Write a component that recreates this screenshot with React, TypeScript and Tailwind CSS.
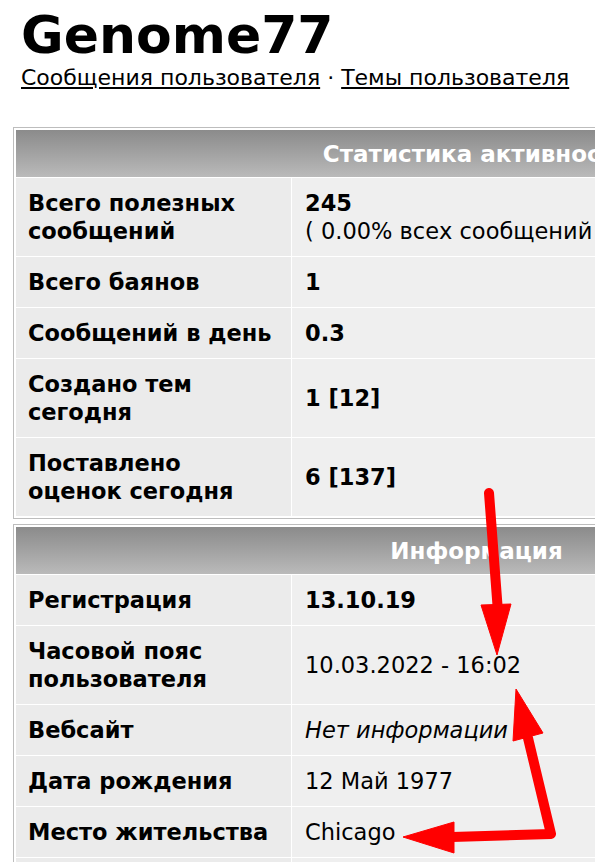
import React from 'react';

type Row = { label: string[]; value: React.ReactNode };

const stats: Row[] = [
  {
    label: ['Всего полезных', 'сообщений'],
    value: (
      <>
        <b>245</b>
        <br />( 0.00% всех сообщений )
      </>
    ),
  },
  { label: ['Всего баянов'], value: <b>1</b> },
  { label: ['Сообщений в день'], value: <b>0.3</b> },
  { label: ['Создано тем', 'сегодня'], value: <b>1 [12]</b> },
  { label: ['Поставлено', 'оценок сегодня'], value: <b>6 [137]</b> },
];

const info: Row[] = [
  { label: ['Регистрация'], value: <b>13.10.19</b> },
  { label: ['Часовой пояс', 'пользователя'], value: '10.03.2022 - 16:02' },
  { label: ['Вебсайт'], value: <i>Нет информации</i> },
  { label: ['Дата рождения'], value: '12 Май 1977' },
  { label: ['Место жительства'], value: 'Chicago' },
  { label: ['Интересы'], value: <i>Нет информации</i> },
];

function StatTable({ title, rows }: { title: string; rows: Row[] }) {
  return (
    <div className="w-[927px] border border-[#bdbdbd] bg-white p-px">
      <table className="w-full border-separate border-spacing-[1px]">
        <thead>
          <tr>
            <th
              colSpan={2}
              className="h-[47px] bg-linear-to-b from-[#8b8b8b] to-[#bababa] text-center text-[23px] font-bold text-white"
            >
              {title}
            </th>
          </tr>
        </thead>
        <tbody>
          {rows.map((r, i) => (
            <tr key={i}>
              <td className="w-[275px] bg-[#ebebeb] px-[12px] py-[11px] align-middle font-bold">
                {r.label.map((l, j) => (
                  <div key={j}>{l}</div>
                ))}
              </td>
              <td className="bg-[#efefef] px-[13px] py-[11px] align-middle whitespace-nowrap">{r.value}</td>
            </tr>
          ))}
        </tbody>
      </table>
    </div>
  );
}

export default function App() {
  return (
    <div className="relative h-[862px] w-[595px] overflow-hidden bg-white font-['DejaVu_Sans',Verdana,sans-serif] text-[22.5px] leading-[28px] text-black">
      <div className="pl-[21px] pt-[9px]">
        <h1 className="text-[52px] leading-none font-bold">Genome77</h1>
        <div className="mt-[3px] text-[22px]">
          <a href="#" className="underline">
            Сообщения пользователя
          </a>{' '}
          ·{' '}
          <a href="#" className="underline">
            Темы пользователя
          </a>
        </div>
      </div>

      <div className="mt-[35px] ml-[13px] flex flex-col gap-[5px]">
        <StatTable title="Статистика активности" rows={stats} />
        <StatTable title="Информация" rows={info} />
      </div>

      {/* red annotation arrows */}
      <svg className="pointer-events-none absolute inset-0" width="595" height="862" viewBox="0 0 595 862">
        <g fill="#ff0000" stroke="#ff0000">
          <line x1="489" y1="493" x2="498" y2="612" strokeWidth="10" strokeLinecap="round" />
          <polygon points="481,605 511,604 497,655" strokeWidth="1" />
          <polyline
            points="528,738 551,834 452,837"
            fill="none"
            strokeWidth="10"
            strokeLinejoin="round"
            strokeLinecap="round"
          />
          <polygon points="516,689 513,741 543,733" strokeWidth="1" />
          <polygon points="403,837 454,822 454,853" strokeWidth="1" />
        </g>
      </svg>
    </div>
  );
}
